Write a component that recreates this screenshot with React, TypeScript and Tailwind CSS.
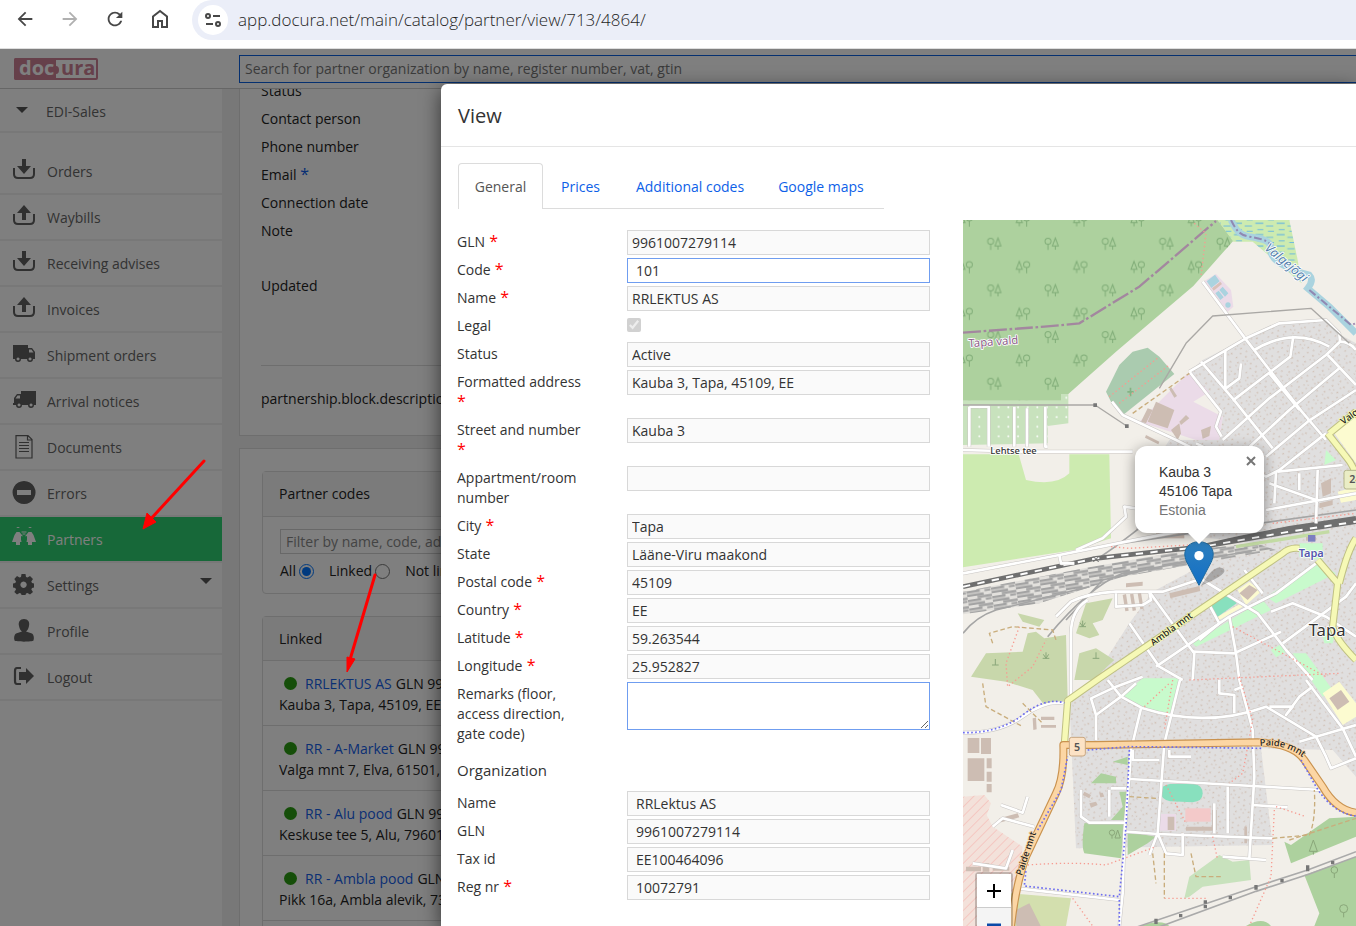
import type { ReactNode } from "react";
import { MdArrowBack, MdArrowForward, MdRefresh } from "react-icons/md";

const icons: Record<string, ReactNode> = {
  download: (
    <>
      <path d="M10 0h4v7h5l-7 8-7-8h5z" />
      <path d="M2 9v6q0 4 4 4h12q4 0 4-4V9" fill="none" stroke="currentColor" strokeWidth="2" />
    </>
  ),
  upload: (
    <>
      <path d="M10 15h4V8h5l-7-8-7 8h5z" />
      <path d="M2 9v6q0 4 4 4h12q4 0 4-4V9" fill="none" stroke="currentColor" strokeWidth="2" />
    </>
  ),
  truckRight: (
    <path
      fillRule="evenodd"
      d="M1 2h15v3h4l3 4v7h-2a3 3 0 0 1-6 0H9a3 3 0 0 1-6 0H1zM17 6.500v3h4.500l-2-3zM6 14.500a1.500 1.500 0 1 0 .1 0zM18 14.500a1.500 1.500 0 1 0 .1 0z"
    />
  ),
  truckLeft: (
    <path
      fillRule="evenodd"
      d="M24 2H9v3H5L2 9v5H1v2h3a3 3 0 0 0 6 0h6a3 3 0 0 0 6 0h2zM8 6.500v3H3.500l2-3zM7 14.500a1.500 1.500 0 1 0 .1 0zM19 14.500a1.500 1.500 0 1 0 .1 0z"
    />
  ),
  document: (
    <path
      d="M4 .6h12l4 4V23H4zM15.500.6V5H20M7 7.500h10M7 10.500h10M7 13.500h10M7 16.500h10"
      fill="none"
      stroke="currentColor"
      strokeWidth="1.200"
    />
  ),
  errors: <path fillRule="evenodd" d="M12 0a11.500 11.500 0 1 0 .1 0zM5 9h14v5H5z" />,
  partners: (
    <path d="M6 1a2 2 0 1 1 .1 0zM4.500 5h3l2 2.500 1 1v1l-1.500-.5v3.500l.5 2.500H8v3H4v-3H0l2.500-7zM18 1a2 2 0 1 1 .1 0zM16.500 5h3l2 3L24 15h-4v3h-4v-3h-1.500l.5-2.500V9l-1.500.5v-1l1-1zM9.500 4.500h5v1h-5zM10.500 6.500h3v1h-3z" />
  ),
  settings: (
    <path
      fillRule="evenodd"
      d="M9.500 1h4l.5 3 1.500.6L18 3l3 3-1.700 2.500.7 1.500 2 .5v4l-2 .5-.7 1.500L21 19l-3 2.500-2.500-1.500-1.500.6-.5 1.400h-4L9 20.600l-1.500-.6L5 21.500 2.300 19 4 16.500 3.300 15 1 14.500v-4l2.300-.5.7-1.500L2.300 6 5 3l2.500 1.600L9 4zM11.500 8.500a3.200 3.200 0 1 0 .1 0z"
    />
  ),
  profile: <path d="M12 0c4 0 6 3 5 7-.5 3-2 5-3 5.500L20 14.500c1.500 1 2.500 4 1.500 7-1 1.500-18 1.500-19 0-1-3 0-6 1.500-7l6-2C9 12 7.500 10 7 7c-1-4 1-7 5-7z" />,
  logout: (
    <>
      <path d="M9 3H5Q3 3 3 6v10q0 3 2 3h4" fill="none" stroke="currentColor" strokeWidth="2.200" />
      <path d="M7 7h7V3l8 8-8 8v-4H7z" />
    </>
  ),
};

function MenuIcon({ name }: { name: string }) {
  return (
    <svg viewBox="0 0 24 24" className="h-6 w-6 shrink-0" fill="currentColor" aria-hidden="true">
      {icons[name]}
    </svg>
  );
}

const menu = [
  { label: "Orders", icon: "download" },
  { label: "Waybills", icon: "upload" },
  { label: "Receiving advises", icon: "download" },
  { label: "Invoices", icon: "upload" },
  { label: "Shipment orders", icon: "truckRight" },
  { label: "Arrival notices", icon: "truckLeft" },
  { label: "Documents", icon: "document" },
  { label: "Errors", icon: "errors" },
  { label: "Partners", icon: "partners", active: true },
  { label: "Settings", icon: "settings", caret: true },
  { label: "Profile", icon: "profile" },
  { label: "Logout", icon: "logout" },
];

const linkedPartners = [
  { name: "RRLEKTUS AS", gln: "GLN 9961007279114", address: "Kauba 3, Tapa, 45109, EE" },
  { name: "RR - A-Market", gln: "GLN 9961007279213", address: "Valga mnt 7, Elva, 61501, EE" },
  { name: "RR - Alu pood", gln: "GLN 9961007279312", address: "Keskuse tee 5, Alu, 79601, EE" },
  { name: "RR - Ambla pood", gln: "GLN 9961007279411", address: "Pikk 16a, Ambla alevik, 73502, EE" },
];

type FieldDef = {
  id: string;
  label: string;
  value?: string;
  required?: boolean;
  editable?: boolean;
  wide?: boolean;
  kind?: "checkbox" | "textarea";
};

const locationFields: FieldDef[] = [
  { id: "gln", label: "GLN", value: "9961007279114", required: true },
  { id: "code", label: "Code", value: "101", required: true, editable: true, wide: true },
  { id: "name", label: "Name", value: "RRLEKTUS AS", required: true },
  { id: "legal", label: "Legal", kind: "checkbox" },
  { id: "status", label: "Status", value: "Active" },
  { id: "address", label: "Formatted address", value: "Kauba 3, Tapa, 45109, EE", required: true },
  { id: "street", label: "Street and number", value: "Kauba 3", required: true },
  { id: "room", label: "Appartment/room number", value: "" },
  { id: "city", label: "City", value: "Tapa", required: true },
  { id: "state", label: "State", value: "Lääne-Viru maakond" },
  { id: "postal", label: "Postal code", value: "45109", required: true },
  { id: "country", label: "Country", value: "EE", required: true },
  { id: "lat", label: "Latitude", value: "59.263544", required: true },
  { id: "lng", label: "Longitude", value: "25.952827", required: true },
  { id: "remarks", label: "Remarks (floor, access direction, gate code)", kind: "textarea" },
];

const organizationFields: FieldDef[] = [
  { id: "org-name", label: "Name", value: "RRLektus AS", wide: true },
  { id: "org-gln", label: "GLN", value: "9961007279114", wide: true },
  { id: "org-tax", label: "Tax id", value: "EE100464096", wide: true },
  { id: "org-reg", label: "Reg nr", value: "10072791", required: true, wide: true },
];

/* ── Browser toolbar ─────────────────────────────────────────── */
function BrowserBar() {
  return (
    <div className="flex h-[49px] shrink-0 items-start border-b border-[#dedede] bg-white text-[#474747]">
      <div className="flex items-center gap-[23px] pt-2 pl-[14px]">
        <button aria-label="Back"><MdArrowBack size={22} /></button>
        <button aria-label="Forward" className="text-[#b0b0b0]"><MdArrowForward size={22} /></button>
        <button aria-label="Reload"><MdRefresh size={22} /></button>
        <button aria-label="Home">
          <svg viewBox="0 0 22 22" className="h-[22px] w-[22px]" fill="none" stroke="currentColor" strokeWidth="2">
            <path d="M4 19V8.500L11 3l7 5.500V19h-5v-6H9v6z" />
          </svg>
        </button>
      </div>
      <div className="ml-[21px] flex h-10 flex-1 items-center gap-[10px] rounded-l-full bg-[#ebeef8] pl-[6px]">
        <span className="flex h-[30px] w-[30px] shrink-0 items-center justify-center rounded-full bg-white">
          <svg viewBox="0 0 18 18" className="h-[18px] w-[18px]" fill="none" stroke="currentColor" strokeWidth="2">
            <circle cx="4" cy="5" r="2" />
            <path d="M9 5h7M2 13h7" />
            <circle cx="14" cy="13" r="2" />
          </svg>
        </span>
        <input
          aria-label="Address"
          defaultValue="app.docura.net/main/catalog/partner/view/713/4864/"
          className="min-w-0 flex-1 bg-transparent text-[17px] font-light text-[#1f1f1f] outline-none"
        />
      </div>
    </div>
  );
}

function Logo() {
  return (
    <svg viewBox="0 0 84 22" className="h-[22px] w-[84px]" role="img" aria-label="docura">
      <rect x="1" y="1" width="82" height="20" rx="1" fill="#fff" stroke="#cd8095" strokeWidth="2" />
      <path d="M2 0h40v8q3 0 3 4t-3 4v6H2q-2 0-2-2V2q0-2 2-2z" fill="#cd8095" />
      <text x="5" y="17" fontFamily="Open Sans, sans-serif" fontSize="20" fontWeight="700" fill="#fff">doc</text>
      <text x="47" y="17" fontFamily="Open Sans, sans-serif" fontSize="20" fontWeight="700" fill="#cd8095">ura</text>
    </svg>
  );
}

function Caret() {
  return (
    <svg viewBox="0 0 12 6" className="h-[6px] w-3" fill="#555" aria-hidden="true">
      <path d="M0 0h12L6 6z" />
    </svg>
  );
}

function Sidebar() {
  return (
    <nav className="w-[222px] shrink-0 bg-white text-[#666]">
      <button className="mb-4 flex h-11 w-full items-center gap-[18px] border-b-2 border-[#f0f0f0] pl-4">
        <Caret />
        <span className="pt-1">EDI-Sales</span>
      </button>
      {menu.map((item) => (
        <a
          key={item.label}
          href="#"
          className={
            item.active
              ? "flex h-[46px] items-center gap-[11px] border-b-2 border-[#f0f0f0] bg-[#2fd072] pr-[10px] pl-3 text-white"
              : "flex h-[46px] items-center gap-[11px] border-b-2 border-[#f0f0f0] pr-[10px] pl-3"
          }
        >
          <span className={item.active ? "text-white" : "text-[#606060]"}>
            <MenuIcon name={item.icon} />
          </span>
          <span className="flex-1 pt-[2px]">{item.label}</span>
          {item.caret && <span className="pb-2"><Caret /></span>}
        </a>
      ))}
    </nav>
  );
}

/* ── Page behind the dialog ──────────────────────────────────── */
function PartnerPage() {
  return (
    <main className="min-w-0 flex-1 bg-[#f1f1f1] pl-[17px] text-[#222]">
      <section className="-mt-[13px] h-[360px] border border-[#dcdcdc] bg-white px-[21px]">
        <dl className="leading-7">
          <dt>Status</dt>
          <dt>Contact person</dt>
          <dt>Phone number</dt>
          <dt>Email <span className="text-[16px] leading-[0px] text-[#0a5be8]">*</span></dt>
          <dt>Connection date</dt>
          <dt className="mb-[27px]">Note</dt>
          <dt>Updated</dt>
        </dl>
        <p className="mt-[65px] border-t border-[#dcdcdc] pt-[23px]">partnership.block.description</p>
      </section>

      <section className="mt-3 border border-[#dcdcdc] bg-white px-[22px] pt-[22px]">
        <div className="rounded border border-[#dcdcdc]">
          <h2 className="flex h-[45px] items-center border-b border-[#dcdcdc] bg-[#f7f7f7] px-4">Partner codes</h2>
          <div className="h-[76px] px-[17px] pt-3">
            <input
              aria-label="Filter"
              placeholder="Filter by name, code, address"
              className="block h-[25px] w-full border border-[#d0d0d0] px-[5px] placeholder:text-[#888]"
            />
            <div className="flex items-center gap-[15px] pt-[7px]">
              <label className="flex items-center gap-[3px]">
                All <input type="radio" name="scope" defaultChecked className="h-[15px] w-[15px] accent-[#0075ff]" />
              </label>
              <label className="flex items-center gap-[3px]">
                Linked <input type="radio" name="scope" className="h-[15px] w-[15px]" />
              </label>
              <label className="flex items-center gap-[3px]">
                Not linked <input type="radio" name="scope" className="h-[15px] w-[15px]" />
              </label>
            </div>
          </div>
        </div>

        <div className="mt-[22px] rounded border border-[#dcdcdc]">
          <h2 className="flex h-[43px] items-center bg-[#f7f7f7] px-4">Linked</h2>
          {linkedPartners.map((p) => (
            <div key={p.name} className="h-[65px] border-t border-[#dcdcdc] px-4 pt-3 leading-[21px]">
              <div className="flex items-center gap-1">
                <span className="mr-1 ml-[5px] h-[13px] w-[13px] rounded-full bg-[#2a9d12]" />
                <a href="#" className="text-[#1560e8]">{p.name}</a>
                <span>{p.gln}</span>
              </div>
              <p>{p.address}</p>
            </div>
          ))}
          <div className="h-[65px] border-t border-[#dcdcdc]" />
        </div>
      </section>
    </main>
  );
}

/* ── Dialog form ─────────────────────────────────────────────── */
function Field({ field }: { field: FieldDef }) {
  return (
    <div className="flex items-start pb-[6px]">
      <label htmlFor={field.id} className="w-[170px] shrink-0 pt-[2px] pr-9 leading-5">
        {field.label}
        {field.required && <span className="text-[16px] leading-[0px] text-[#f00]"> *</span>}
      </label>
      {field.kind === "checkbox" ? (
        <div className="flex h-[22px] items-center">
          <input id={field.id} type="checkbox" defaultChecked disabled className="h-[14px] w-[14px]" />
        </div>
      ) : field.kind === "textarea" ? (
        <textarea id={field.id} className="block h-12 w-[303px] border border-[#6f9df0] px-1" />
      ) : (
        <input
          id={field.id}
          defaultValue={field.value}
          readOnly={!field.editable}
          className={
            field.editable
              ? "-mb-1 h-[25px] w-[303px] border border-[#6f9df0] bg-white px-2"
              : field.wide
                ? "-mb-1 h-[25px] w-[303px] border border-[#d8d8d8] bg-[#fafafa] px-2"
                : "-mb-1 h-[25px] w-[303px] border border-[#d8d8d8] bg-[#fafafa] px-1"
          }
        />
      )}
    </div>
  );
}

/* ── Map ─────────────────────────────────────────────────────── */
const forest = "#add19e";
const meadow = "#cdebb0";
const park = "#c8facc";
const scrub = "#c8d7ab";

const residential =
  "M700 485L740 450 870 385 970 340 1110 330 1145 370 1200 400V1700L1130 1620 915 1615 950 1905 360 1915 340 1470 410 1410 520 1240 590 1145 750 1060 900 1000 540 960V850L640 690 790 690 800 620Z";

const streets = [
  "M740 215L865 382 1035 602 1110 690", "M700 485L870 385 970 340 1110 330 1150 370 1152 395 1110 435 940 565 800 690",
  "M735 455L830 565 950 715", "M700 485L795 605 780 650 797 680", "M808 420V538", "M855 460L850 505 805 538",
  "M895 420Q1010 350 1120 410", "M1012 378L1003 440 830 572", "M1152 395Q1180 395 1200 420", "M1115 435L1200 525",
  "M1150 475L1000 600 870 720 820 750", "M940 490L1030 600", "M1200 540L1055 635 930 740", "M468 575L500 615 660 690 720 720",
  "M21 720L200 725H530", "M1110 670L970 780 930 800 720 700", "M40 590H98V710M40 590V710M175 590V710M213 595V710M268 590V710H275",
  "M965 785L1160 765M960 785L955 880M1030 790V840M1085 780L1080 940M930 900L1200 850M940 820L1080 870",
  "M360 1020L440 985 510 920 505 890 540 895", "M21 1090L310 1035 560 985 800 940", "M310 1035L315 1060 355 1060",
  "M300 1220L345 1175Q395 1150 480 1145L620 1145 740 1105", "M345 1480V1270Q345 1200 395 1170",
  "M480 1150V1190L560 1185 585 1170 580 1145", "M580 1145L700 1310 715 1330 710 1410", "M740 1110L905 1210 990 1320 1070 1410",
  "M600 1370L820 1220 960 1150 1080 1060", "M820 1220L840 1330 850 1410", "M710 1325L835 1330 975 1265",
  "M520 1240L610 1370 680 1410", "M980 1300L1170 1160 1200 1120", "M945 1205L1010 1180 1110 1220 1200 1280",
  "M760 1185L790 1240 730 1290", "M865 1080L920 1150", "M420 1590L420 1515 405 1465 480 1430 560 1400",
  "M420 1515L495 1460 540 1420M455 1410L495 1460 560 1495Q750 1555 930 1490L1080 1580 1200 1545",
  "M555 1495L525 1620 520 1700 505 1870 500 2050 490 2148", "M672 1410L625 1600 605 1870 580 1935M605 1870L630 1930 680 1935V1870",
  "M850 1410L890 1560 895 1700 880 1945", "M790 1410V1450L835 1455V1510M835 1440L860 1430", "M940 1490L1010 1490 990 1515 1030 1460 1070 1430",
  "M520 1707L890 1728 1095 1740", "M510 1865L605 1872 950 1885", "M890 1785L995 1792", "M815 1730V1870M775 1780V1870",
  "M1050 1410L1160 1555 1200 1640M1080 1580L1110 1640 1125 1675 1200 1645M1030 1595L1080 1580",
  "M530 1620V1650H610M640 1620V1640H705", "M375 1740V1820L400 1838H505M465 1735H510M460 1740V1820", "M185 2035L490 2070",
  "M21 1568Q130 1570 200 1520T325 1480", "M135 1785L200 1808 215 1760M110 1850L140 1825 235 1850", "M50 1960L150 1975 170 1920", "M800 1940L930 1950",
];

const yellowRoads = [
  "M325 1605L335 1472 430 1405 980 1030Q1000 1012 1030 1015", "M1085 1050L1145 1120 1130 1250Q1140 1290 1200 1350",
  "M1200 985Q1175 1020 1150 1120", "M1120 670L1200 605M1115 670L1170 740Q1195 770 1200 800",
];

const orangeRoads = ["M165 2150Q180 2020 210 1940L300 1750Q325 1700 322 1605H420L905 1597Q1010 1600 1045 1650L1100 1730Q1140 1800 1200 1808"];

const footways = [
  "M715 40L750 70 735 200", "M460 560L610 440M490 580L640 465", "M465 1010L520 1015 700 1005", "M565 1490L640 1420",
  "M650 1410L625 1560", "M850 1400L890 1530 860 1690 820 1720", "M215 1965Q350 1955 450 1965L600 1910",
  "M630 1725L690 1840", "M960 1790L1050 1820M955 1800L945 2000 880 2148", "M625 2065H750M770 1880L785 1950", "M350 2065L410 2148",
  "M190 1250L150 1360 155 1430 230 1370 270 1290", "M830 1250L1110 1400", "M950 940L1200 910", "M700 1410L1150 1390",
];

const tracks = [
  "M530 610L700 490", "M110 1300L100 1270 170 1250 290 1260 300 1290", "M80 1420L90 1490 200 1550M200 1480L260 1540",
  "M520 1760L600 1765", "M590 1930L600 2020", "M625 1930V2065", "M950 1885L1060 1875Q1080 1830 1075 1740", "M1000 1890L1200 1825", "M705 1930L720 2000H800",
];

const buildings = [
  "M600 575l55 25-20 55-60-20z", "M575 595l-20 40 15 5 20-40z", "M645 530l18 28-8 5-15-25z", "M690 615l10 10-25 20-5-10z", "M735 660l30-12-5 30-20 8z", "M645 660l25-20 5 30-10 20z",
  "M35 1584h35v45H35zM75 1584h30v48H75zM35 1645h50v68H35zM92 1645h15v30H92zM92 1685h15v30H92zM92 1722h15v25H92z", "M130 1825l55-15 5 12-55 15z",
  "M230 1525l10-2 2 35-10 2zM255 1520h40v10h-40zM255 1545h45v8h-45z", "M170 2105l50-25 40 80h-75z", "M640 1150l90-22 3 15-90 22z", "M510 1120l50-5v12l-50 5z",
  "M600 970h85v15h-85z", "M1050 980h30v12h-30z", "M1095 820l30-15v45l-25 10zM1090 880l40-10v15l-40 10z", "M850 1150l30-25 25 15-30 30z",
  "M500 1155l10-3 8 50-10 2zM522 1153l10-2 8 50-10 2zM545 1150l10-2 8 48-10 2z",
  "M385 1745l20 10-5 10-20-10zM400 1780l20-5 5 10-20 8zM430 1750l10-2 5 12-12 2z", "M635 1820h20v40h-20zM690 1850h80v12h-80z",
  "M865 1850h8v50h-8zM768 1800h14v60h-14z", "M1120 1465l35-25 25 35-35 25z", "M570 675l40 20-3 8-40-20z", "M30 1970h45v14H30zM80 1960h20v25H80zM110 1970h50v12h-50z",
];

function PartnerMap() {
  return (
    <svg
      viewBox="21 30 1179 2118"
      preserveAspectRatio="xMinYMin slice"
      className="block h-full w-full font-normal"
      role="img"
      aria-label="Map of Tapa"
    >
      <defs>
        <pattern id="trees" width="172" height="140" patternUnits="userSpaceOnUse">
          <g fill="none" stroke="#80ac77" strokeWidth="3">
            <circle cx="40" cy="24" r="9" />
            <path d="M40 33v17M18 14l-9 24h18zM18 38v11" />
            <circle cx="104" cy="94" r="9" />
            <path d="M104 103v17M126 84l-9 24h18zM126 108v11" />
          </g>
        </pattern>
        <pattern id="houses" width="71" height="67" patternUnits="userSpaceOnUse" patternTransform="rotate(-33) scale(.8)">
          <path
            d="M4 6l6 3-3 5-5-3zM24 2h6v4h-6zM45 9l5 4-4 4-5-4zM62 3h4v6h-4zM10 30h6v4h-6zM33 24l5 3-3 5-5-3zM54 31h6v4h-6zM3 50l5-3 3 5-5 3zM25 52h4v6h-4zM43 45l5 3-3 5-5-3zM64 54h4v5h-4zM37 62h5v4h-5z"
            fill="#d0c0b5"
          />
        </pattern>
        <pattern id="marsh" width="64" height="34" patternUnits="userSpaceOnUse">
          <path d="M2 6h24M34 14h22M8 25h18M40 30h18" stroke="#69b7df" strokeWidth="3" />
        </pattern>
        <pattern id="orchard" width="29" height="29" patternUnits="userSpaceOnUse">
          <path d="M12 8l3 4-3 4-3-4z" fill="#fff" />
        </pattern>
        <pattern id="yard" width="74" height="26" patternUnits="userSpaceOnUse" patternTransform="rotate(-9)">
          <path d="M0 5h50M30 13h44M0 21h40M54 22h18" stroke="#a3a3a3" strokeWidth="7" />
        </pattern>
        <pattern id="hatch" width="20" height="20" patternUnits="userSpaceOnUse" patternTransform="rotate(45)">
          <path d="M0 0v20" stroke="#f5c3bd" strokeWidth="5" />
        </pattern>
        <linearGradient id="pin" x1="0" y1="0" x2="0" y2="1">
          <stop offset="0" stopColor="#2e7fbd" />
          <stop offset="1" stopColor="#126fc6" />
        </linearGradient>
        <path id="paide" d="M912 1608Q1000 1598 1062 1662" />
      </defs>

      <path d="M0 0h1600v2400H0z" fill="#f2efe9" />

      {/* land cover */}
      <path d="M21 30H785L832 92 712 228 480 425 337 552H315V572H21Z" fill={forest} />
      <path d="M21 30H785L832 92 712 228 480 425 337 552H315V572H21Z" fill="url(#trees)" />
      <path d="M21 572H315V552H337V640L275 648V700L21 705Z" fill="#c8e2bd" />
      <path d="M21 572H315V552H337V640L275 648V700L21 705Z" fill="url(#orchard)" />
      <path d="M785 30H1000L1025 150 1037 220 890 95H832Z" fill={meadow} />
      <path d="M785 30H1000L1025 150 1037 220 890 95H832Z" fill="url(#marsh)" />
      <path d="M450 545L490 465 530 425 575 413 610 440 655 492 505 612 470 585Z" fill="#aacbaf" />
      <path d="M514 543h7v-10h5v10h7v5h-7v11h-5v-11h-7z" fill="#84b384" />
      <path d="M745 213L780 192 825 240 832 290 815 305Z" fill="#ebdbe8" />
      <path d="M752 214l25-20 14 20-25 20zM790 240l10-10 17 20-10 10zM778 250l10-8 15 20-10 8zM808 285a8 8 0 1 1 16 0a8 8 0 1 1-16 0" fill="#aad3df" />
      <path d="M768 235l25-20 5 7-25 20z" fill="#d9c0b8" />
      <path d={residential} fill="#e0dfdf" />
      <path d={residential} fill="url(#houses)" />
      <path d="M700 485L760 545 712 575 800 620 790 690H720L550 635Z" fill="#ebdbe8" />
      <path d="M21 733H188L210 810Q300 830 340 790V733H460L465 985 355 1020 21 1072Z" fill={meadow} />
      <path
        d="M185 1210L265 1230 250 1250 200 1235ZM360 1270L390 1180 470 1165 440 1230 410 1240 430 1275 400 1285ZM45 1400L90 1330 200 1325 215 1270 240 1265 265 1285 330 1275 335 1470 265 1485 230 1440 150 1415ZM355 1410L370 1330 420 1315 475 1350 410 1410Z"
        fill={scrub}
      />
      <path
        d="M710 1300L920 1170 945 1200 720 1310ZM930 1160L1090 1060 1140 1090 960 1180ZM1030 1000H1100V1050L1030 1040ZM500 1455L560 1405H672L645 1518 560 1495ZM945 1320L980 1300 990 1325 960 1342ZM1010 1330H1050L1130 1440 1100 1460ZM1110 720L1140 750 1105 765ZM1095 1260H1140L1130 1300H1105Z"
        fill={park}
      />
      <path d="M785 1220L855 1180 860 1190 790 1230ZM845 1140L880 1115 915 1145 870 1185ZM1145 845L1200 830V870L1155 878ZM1100 1450L1150 1415 1200 1480V1520L1160 1545ZM1135 670L1200 620V760Z" fill="#fcfbd0" />
      <path d="M758 1188L810 1140 842 1180 785 1220Z" fill="#88e0be" />
      <path d="M642 1722h72q26 4 26 28t-30 27l-68-3q-27-5-27-27t27-25z" fill="#88e0be" />
      <path d="M21 1760L85 1755 105 1780 92 1815 110 1850 200 1910 170 2148H21Z" fill="#f3e1da" />
      <path d="M21 1760L85 1755 105 1780 92 1815 110 1850 200 1910 170 2148H21Z" fill="url(#hatch)" />
      <path d="M165 2050L345 2065 330 2148H170Z" fill="#d3dfae" />
      <path
        d="M385 1840L505 1835 495 1945 385 1930Q375 1910 385 1840ZM515 1865L600 1880 575 1900 515 1935ZM470 1655L515 1640V1665ZM405 1720L435 1690 480 1700V1720ZM490 1745H510V1830H465L500 1790ZM985 1895L1005 1960 1200 1880V1820L1120 1825 1005 1905ZM1045 1995L1200 1940V2148H1075L1090 2110ZM550 2148Q620 2125 640 2148ZM870 2148Q920 2118 945 2148Z"
        fill={forest}
      />
      <path d="M685 2065L700 2000 790 1935 830 1955 880 1950 885 2010 740 2030 700 2060Z" fill="#c8e2bd" />
      <path d="M688 1795h76v40h-76z" fill="#f3c9c9" />
      <path d="M610 1812h50v50h-50z" fill="#ebdbe8" />
      <g fill="#cdbdb3">{buildings.map((d) => <path key={d} d={d} />)}</g>

      {/* water and borders */}
      <path d="M825 30C840 60 850 75 880 80S950 90 945 120 1000 180 1060 195Q1075 210 1055 235L1120 290 1200 370" fill="none" stroke="#aad3df" strokeWidth="20" />
      <path d="M825 30C840 60 850 75 880 80S930 90 940 100M1060 240L1120 290 1185 345 1200 340" fill="none" stroke="#85689e" strokeWidth="6" strokeDasharray="24 8 6 8" opacity=".7" />
      <path d="M21 368L265 350 370 340 550 230 780 33" fill="none" stroke="#a3879f" strokeWidth="7" strokeDasharray="54 8 8 8" />

      {/* railway */}
      <path d="M21 1145L400 1072 700 1020 900 1000 960 1020 700 1065 500 1100 250 1180 21 1213Z" fill="#e2e0dc" />
      <path d="M21 1145L400 1072 700 1020 900 1000 960 1020 700 1065 500 1100 250 1180 21 1213Z" fill="url(#yard)" />
      <g fill="none" stroke="#a5a5a5" strokeWidth="5">
        <path d="M275 1280Q400 1130 500 1090L900 1020M330 1230L440 1110 700 1050M21 1270Q60 1220 120 1200L400 1130M420 1050Q480 1010 530 970L620 900M500 1000L800 955 1200 900" />
      </g>
      <path d="M840 1010L1120 965" stroke="#c3dba4" strokeWidth="10" />
      <g fill="none" stroke="#6f6f6f" strokeWidth="14">
        <path d="M21 1130L420 1045 740 1010 1000 965 1200 935M690 1020L850 985 1000 955 1200 925" />
      </g>
      <path d="M21 1130L420 1045 740 1010 1000 965 1200 935" fill="none" stroke="#fff" strokeWidth="6" strokeDasharray="22 22" />
      <path d="M545 2150L900 2030 1055 1980 1200 1925M590 2158L900 2044 1060 1992 1200 1940" fill="none" stroke="#aaa" strokeWidth="5" />

      {/* streets */}
      <g fill="none" strokeLinejoin="round">
        <g stroke="#c9c6c4" strokeWidth="11">{streets.map((d) => <path key={d} d={d} />)}</g>
        <g stroke="#fff" strokeWidth="8">{streets.map((d) => <path key={d} d={d} />)}</g>
        <g stroke="#f79b91" strokeWidth="4" strokeDasharray="4 8">{footways.map((d) => <path key={d} d={d} />)}</g>
        <g stroke="#c9ad7c" strokeWidth="4" strokeDasharray="14 8">{tracks.map((d) => <path key={d} d={d} />)}</g>
        <g stroke="#bfc083" strokeWidth="22">{yellowRoads.map((d) => <path key={d} d={d} />)}</g>
        <g stroke="#f6f9b6" strokeWidth="16">{yellowRoads.map((d) => <path key={d} d={d} />)}</g>
        <g stroke="#c9924f" strokeWidth="24">{orangeRoads.map((d) => <path key={d} d={d} />)}</g>
        <g stroke="#fcd6a4" strokeWidth="17">{orangeRoads.map((d) => <path key={d} d={d} />)}</g>
        <path d="M21 1568Q130 1570 200 1515T325 1479M395 1620L520 1610 700 1612 920 1615M520 1620L510 1850 490 2060 205 2028 210 1980M245 1860L315 1740 335 1640M1035 1650L1080 1730Q1130 1810 1200 1818M490 2070V2148" stroke="#6d6df0" strokeWidth="5" strokeDasharray="5 7" />
        <path d="M21 585H417L512 648M610 535L690 400 770 318 1065 295 1180 400" stroke="#aaa8a5" strokeWidth="4" />
      </g>
      <path d="M412 580h11v11h-11zM507 643h11v11h-11zM743 2071h10v10h-10zM743 2085h10v10h-10zM895 2025h10v14h-10zM1050 1966h10v18h-10zM1125 1953h10v10h-10zM973 2007h10v10h-10zM818 2058h10v10h-10zM669 2112h10v10h-10zM595 2126h10v16h-10z" fill="#777" />
      <path d="M1056 975h22v20h-22z" fill="#7d7fc0" />
      <path d="M412 1040l16 16M428 1040l-16 16" stroke="#666" strokeWidth="3" />
      <g fill="none" stroke="#8aa77a" strokeWidth="3">
        <path d="M1072 1890l-12 34h24zM1072 1924v10M260 1345h20M270 1345v-18M270 1345l-8-12M270 1345l8-12M370 1250h20M380 1250v-18M380 1250l-8-12M380 1250l8-12M108 1365h20M118 1365v-18M410 1345h20M420 1345v-18M1163 2108v14M1135 1990v14" />
        <circle cx="1163" cy="2096" r="12" />
        <circle cx="1135" cy="1980" r="10" />
        <circle cx="468" cy="1868" r="8" />
        <path d="M468 1876v10M485 1860l-8 24h16z" />
      </g>

      {/* labels */}
      <g fontFamily="Noto Sans, sans-serif" stroke="#fff" strokeWidth="5" paintOrder="stroke" strokeLinejoin="round">
        <text transform="translate(924 118) rotate(40)" fontSize="38" fontStyle="italic" fill="#5682ae">Valgejõgi</text>
        <text transform="translate(38 412) rotate(-4)" fontSize="34" fill="#8d618b">Tapa vald</text>
        <text x="103" y="732" fontSize="28" fontWeight="500" fill="#333">Lehtse tee</text>
        <text transform="translate(592 1308) rotate(-36)" fontSize="28" fontWeight="500" fill="#222" stroke="#f6f9b6">Ambla mnt</text>
        <text transform="translate(1162 644) rotate(-35)" fontSize="28" fontWeight="500" fill="#222" stroke="#f6f9b6">Valgejõe</text>
        <text x="1028" y="1042" fontSize="33" fontWeight="600" fill="#5557ad">Tapa</text>
        <text x="1058" y="1278" fontSize="50" fill="#333">Tapa</text>
        <text transform="translate(198 1998) rotate(-72)" fontSize="28" fontWeight="500" fill="#222" stroke="#fcd6a4">Paide mnt</text>
        <text fontSize="28" fontWeight="500" fill="#222" stroke="#fcd6a4"><textPath href="#paide">Paide mnt</textPath></text>
      </g>
      <rect x="340" y="1582" width="48" height="56" rx="7" fill="#fce2c5" stroke="#c8a680" strokeWidth="3" />
      <text x="354" y="1622" fontFamily="Noto Sans, sans-serif" fontSize="32" fontWeight="600" fill="#555">5</text>
      <rect x="1164" y="781" width="80" height="56" rx="7" fill="#eaedc5" stroke="#b4b58c" strokeWidth="3" />
      <text x="1180" y="820" fontFamily="Noto Sans, sans-serif" fontSize="32" fontWeight="600" fill="#555">24</text>

      {/* marker */}
      <path d="M735 1127Q775 1060 800 1075T735 1127" fill="#000" opacity=".25" />
      <path d="M729 1126L697 1065C670 1020 700 995 729 995S788 1020 761 1065Z" fill="url(#pin)" stroke="#1f6a9f" strokeWidth="3" />
      <circle cx="729" cy="1037" r="14" fill="#fff" />
    </svg>
  );
}

function MapPanel() {
  return (
    <div className="relative ml-[33px] min-w-0 flex-1 overflow-hidden">
      <PartnerMap />
      <div className="absolute top-[226px] left-[172px] h-[87px] w-[129px] rounded-xl bg-white pt-[17px] pl-6 font-['Liberation_Sans',sans-serif] text-[14px] leading-[19px] text-[#333] shadow-[0_3px_14px_rgba(0,0,0,0.4)]">
        <p>Kauba 3</p>
        <p>45106 Tapa</p>
        <p className="text-[#757575]">Estonia</p>
        <button aria-label="Close popup" className="absolute top-[10px] right-2 text-[#757575]">
          <svg viewBox="0 0 10 10" className="h-[10px] w-[10px]" stroke="currentColor" strokeWidth="2">
            <path d="M1 1l8 8M9 1L1 9" />
          </svg>
        </button>
        <svg viewBox="0 0 22 11" className="absolute top-full left-[53px] h-[11px] w-[22px]" fill="#fff">
          <path d="M0 0h22L11 11z" />
        </svg>
      </div>
      <div className="absolute top-[652px] left-[12px] w-[38px] rounded border-2 border-black/20 bg-clip-padding text-black">
        <button aria-label="Zoom in" className="flex h-[34px] w-full items-center justify-center border-b border-[#ccc] bg-white">
          <svg viewBox="0 0 14 14" className="h-[14px] w-[14px]" fill="none" stroke="currentColor" strokeWidth="2">
            <path d="M7 0v14M0 7h14" />
          </svg>
        </button>
        <button aria-label="Zoom out" className="flex h-[34px] w-full items-center justify-center bg-[#f4f4f4] text-[#0a4aa8]">
          <svg viewBox="0 0 14 14" className="h-[14px] w-[14px]" fill="none" stroke="currentColor" strokeWidth="3">
            <path d="M0 7h14" />
          </svg>
        </button>
      </div>
    </div>
  );
}

function ViewDialog() {
  return (
    <div role="dialog" aria-label="View" className="flex min-w-0 flex-1 flex-col rounded-tl-md bg-white shadow-[0_5px_20px_rgba(0,0,0,0.6)]">
      <h1 className="flex h-[63px] shrink-0 items-center border-b border-[#e5e5e5] px-[17px] pt-[2px] text-[20px]">View</h1>
      <div className="flex shrink-0 pt-4 pl-[17px]">
        <div role="tablist" className="flex h-[46px] w-[426px]">
          <button role="tab" aria-selected="true" className="w-[85px] rounded-t border border-b-0 border-[#dcdcdc] text-[#555]">General</button>
          <button role="tab" className="border-b border-[#dcdcdc] px-[18px] pt-[2px] text-[#0d5fe8]">Prices</button>
          <button role="tab" className="border-b border-[#dcdcdc] px-[18px] pt-[2px] text-[#0d5fe8]">Additional codes</button>
          <button role="tab" className="flex-1 border-b border-[#dcdcdc] pt-[2px] pl-4 text-left text-[#0d5fe8]">Google maps</button>
        </div>
      </div>
      <div className="flex min-h-0 flex-1 pt-[11px] pl-4">
        <form className="shrink-0 pt-[10px]">
          {locationFields.map((f) => <Field key={f.id} field={f} />)}
          <h2 className="pt-[10px] pb-[11px] text-[15px] leading-5">Organization</h2>
          {organizationFields.map((f) => <Field key={f.id} field={f} />)}
        </form>
        <MapPanel />
      </div>
    </div>
  );
}

export default function App() {
  return (
    <div className="flex h-screen flex-col overflow-hidden font-['Open_Sans','Noto_Sans',sans-serif] text-[14px] leading-5 font-normal text-[#333]">
      <BrowserBar />
      <div className="relative flex min-h-0 flex-1 flex-col">
        <header className="z-10 flex h-10 shrink-0 items-center border-b border-[#ccc] bg-white pl-[14px]">
          <div className="w-[225px] shrink-0"><Logo /></div>
          <input
            aria-label="Search"
            placeholder="Search for partner organization by name, register number, vat, gtin"
            className="h-7 min-w-0 flex-1 border border-r-0 border-[#0a60e0] px-[5px] placeholder:text-[#777]"
          />
        </header>
        <div className="flex min-h-0 flex-1 overflow-hidden">
          <Sidebar />
          <PartnerPage />
        </div>

        <div className="absolute inset-0 z-20 flex overflow-hidden bg-black/50 pt-[35px] pl-[441px]">
          <ViewDialog />
        </div>

        {/* pointers to the menu item and the selected partner */}
        <svg viewBox="0 0 260 220" className="pointer-events-none absolute top-[406px] left-[140px] z-30 h-[220px] w-[260px]" fill="#f00" stroke="#f00">
          <path d="M64 6L8 67" strokeWidth="3" strokeLinecap="round" />
          <path d="M3 74l4-16 9 9z" />
          <path d="M235 120L209 208" strokeWidth="3" strokeLinecap="round" />
          <path d="M207 217v-15l8 2z" />
        </svg>
      </div>
    </div>
  );
}
